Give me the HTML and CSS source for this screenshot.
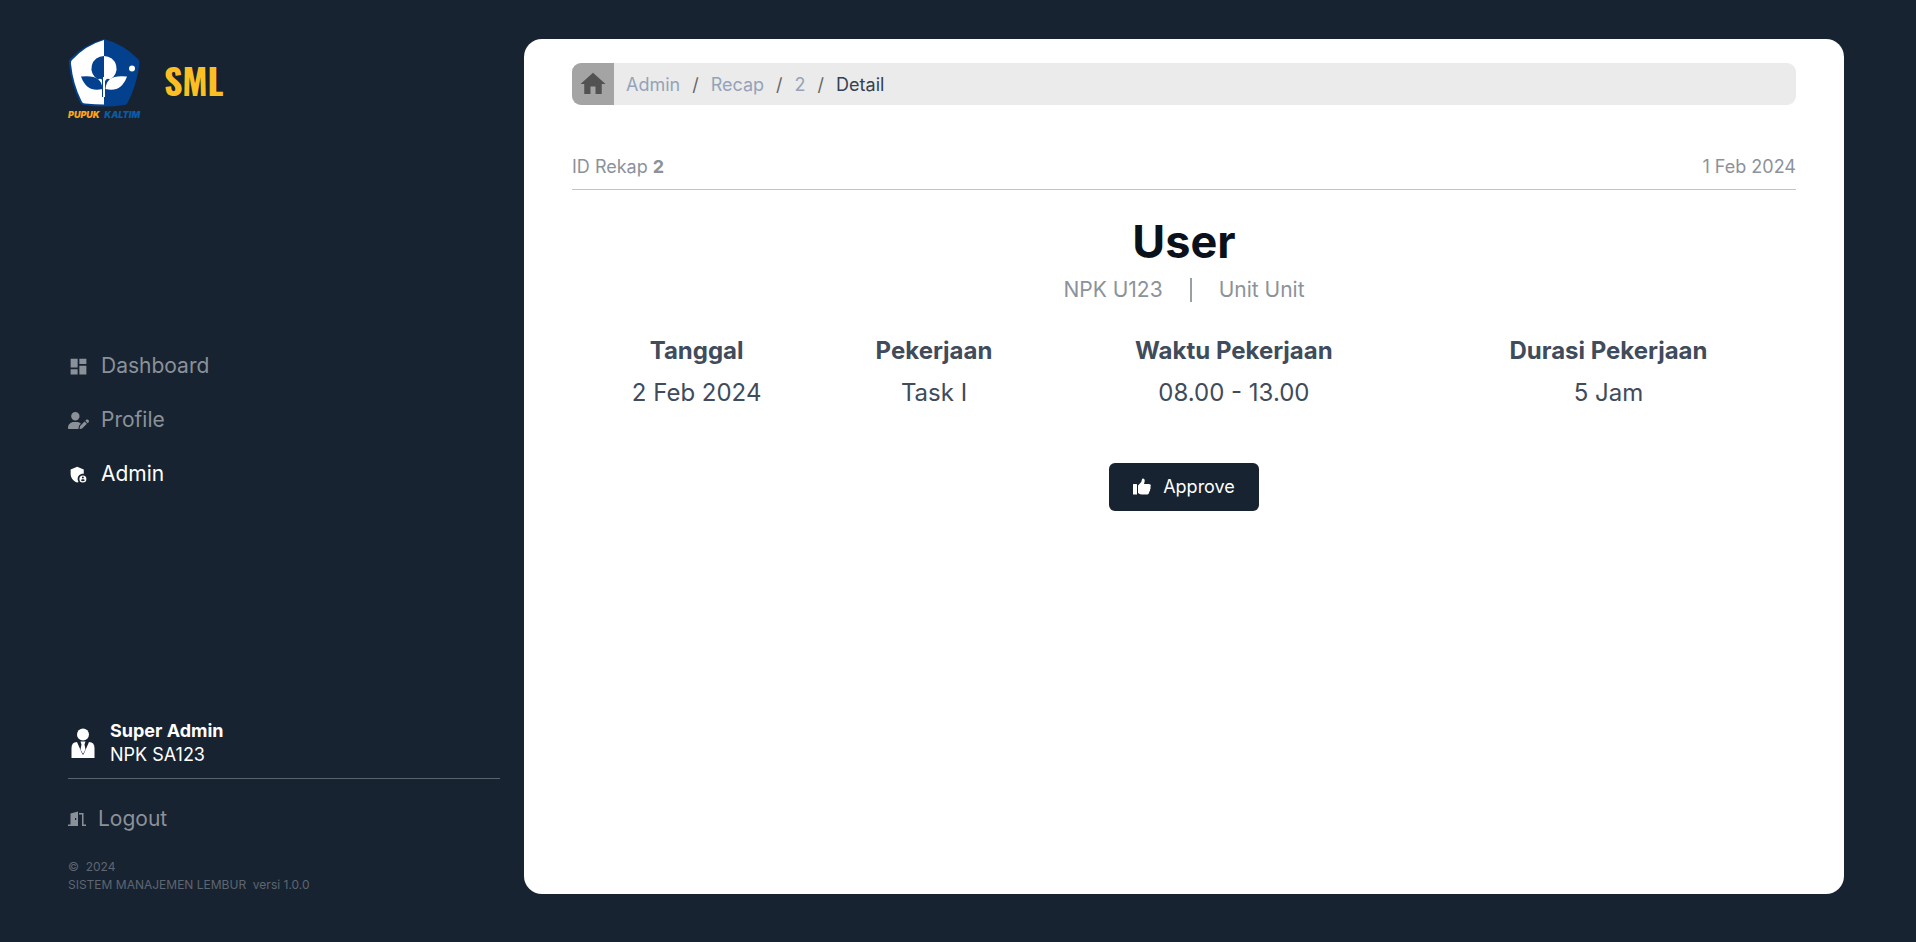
FILE: index.html
```html
<!DOCTYPE html>
<html lang="id">
<head>
<meta charset="utf-8">
<meta name="viewport" content="width=device-width, initial-scale=1">
<title>SML - Detail Rekap</title>
<link rel="stylesheet" href="styles.css">
</head>
<body>
<div class="layout">
  <aside class="sidebar">
    <header class="brand">
      <div class="logo">
        <svg class="logo-mark" viewBox="0 0 72 70" aria-hidden="true">
          <path d="M36 0Q55 5 70 20Q72 22 71.500 25Q69 45 60 63Q59 66 56 66Q36 69 16 66Q13 66 12 63Q3 45 1 25Q0 22 2 20Q17 5 36 0Z" fill="#03418f"/>
          <path d="M36 1Q18 6 4 21Q2.500 22.500 3 25Q5 45 13.500 62Q14.500 64.500 17 64.500Q28 65.500 36 65.500Z" fill="#fff"/>
          <path d="M36 17a12.500 12.500 0 0 0 -6 23.500Q34 38 36 45Z" fill="#03418f"/>
          <path d="M36 17a12.500 12.500 0 0 1 6 23.500Q38 38 36 45Z" fill="#fff"/>
          <path d="M13 37.500Q34 35 34.500 50Q19 54 13 37.500Z" fill="#03418f"/>
          <path d="M59 37.500Q38 35 37.500 50Q53 54 59 37.500Z" fill="#fff"/>
          <path d="M34.500 40V58" stroke="#03418f"/>
          <path d="M35 38h2v20h-2z" fill="#fff"/>
          <circle cx="64" cy="29.500" r="3" fill="#fff"/>
        </svg>
        <p class="logo-text"><span class="logo-first">PUPUK</span> <span class="logo-second">KALTIM</span></p>
      </div>
      <h1 class="brand-name">SML</h1>
    </header>
    <nav class="menu" aria-label="Menu utama">
      <a class="menu-link" href="#dashboard">
        <svg class="icon" viewBox="0 0 24 24" aria-hidden="true"><path d="M13 9V3h8v6h-8zM3 13V3h8v10H3zm10 8V11h8v10h-8zM3 21v-6h8v6H3z"/></svg>
        Dashboard
      </a>
      <a class="menu-link" href="#profile">
        <svg class="icon" viewBox="0 0 640 512" aria-hidden="true"><path d="M224 256a128 128 0 1 0 0-256 128 128 0 1 0 0 256zm-45.700 48C79.800 304 0 383.800 0 482.300 0 498.700 13.300 512 29.700 512h293.100c-3.100-8.800-3.700-18.400-1.400-27.800l15-60.100c2.800-11.300 8.600-21.500 16.800-29.700l40.300-40.300c-32.100-31-75.700-50.100-123.900-50.100zm435.500-68.300c-15.600-15.600-40.900-15.600-56.600 0l-29.400 29.400 71 71 29.400-29.400c15.600-15.600 15.600-40.900 0-56.600zM375.900 417c-4.100 4.100-7 9.200-8.400 14.900l-15 60.100c-1.400 5.500.2 11.200 4.200 15.200s9.700 5.600 15.200 4.200l60.100-15c5.600-1.400 10.800-4.300 14.900-8.400l129.200-129.300-71-71z"/></svg>
        Profile
      </a>
      <a class="menu-link active" href="#admin" aria-current="page">
        <svg class="icon" viewBox="0 0 24 24" aria-hidden="true"><path d="M17 11c.34 0 .67.040 1 .090V6.270L10.500 3 3 6.270v4.910c0 4.540 3.200 8.790 7.500 9.820.55-.13 1.080-.32 1.600-.55A5.970 5.970 0 0 1 11 17c0-3.310 2.690-6 6-6z"/><path fill-rule="evenodd" d="M17 13a4 4 0 1 0 0 8 4 4 0 0 0 0-8zm0 1.380a1.120 1.120 0 1 1 0 2.240 1.120 1.120 0 0 1 0-2.240zm0 5.370c-.93 0-1.740-.46-2.240-1.170.05-.72 1.510-1.080 2.240-1.080s2.190.36 2.240 1.080A2.730 2.730 0 0 1 17 19.750z"/></svg>
        Admin
      </a>
    </nav>
    <footer class="account">
      <div class="account-user">
        <svg class="account-icon" viewBox="0 0 30 34" aria-hidden="true"><circle cx="15" cy="8.500" r="6"/><path d="M9 16L14.500 28.500H15.500L21 16Q26.500 16 26.500 22V32H3.500V22Q3.500 16 9 16Z"/><path d="M12.500 15.500H17.500L16.500 18.500L17.500 23.500L15 28L12.500 23.500L13.500 18.500Z"/></svg>
        <div>
          <p class="account-name">Super Admin</p>
          <p>NPK SA123</p>
        </div>
      </div>
      <a class="logout" href="#logout">
        <svg class="logout-icon" viewBox="0 0 18 16" aria-hidden="true"><path fill-rule="evenodd" d="M0 13.500H2.500V2.500L10 .5V15H0ZM7 7V9H8.200V7Z"/><path d="M11 2H15.500V13.500H18V15H14V3.500H11Z"/></svg>
        Logout
      </a>
      <p class="copyright">©&nbsp; 2024<br>SISTEM MANAJEMEN LEMBUR&nbsp; versi 1.0.0</p>
    </footer>
  </aside>
  <main class="card">
    <nav class="breadcrumb" aria-label="Breadcrumb">
      <a class="home" href="#home" aria-label="Beranda"><svg class="home-icon" viewBox="0 0 24 24" aria-hidden="true"><path d="M10 20v-6h4v6h5v-8h3L12 3 2 12h3v8z"/></svg></a>
      <ol class="crumbs">
        <li><a href="#admin">Admin</a></li>
        <li><a href="#recap">Recap</a></li>
        <li><a href="#recap-2">2</a></li>
        <li><a class="current" href="#detail" aria-current="page">Detail</a></li>
      </ol>
    </nav>
    <div class="meta">
      <p>ID Rekap <strong>2</strong></p>
      <p>1 Feb 2024</p>
    </div>
    <section class="person">
      <h2 class="person-name">User</h2>
      <p class="person-info"><span>NPK U123</span><span class="divider"></span><span>Unit Unit</span></p>
    </section>
    <table class="details">
      <thead>
        <tr><th>Tanggal</th><th>Pekerjaan</th><th>Waktu Pekerjaan</th><th>Durasi Pekerjaan</th></tr>
      </thead>
      <tbody>
        <tr><td>2 Feb 2024</td><td>Task I</td><td>08.00 - 13.00</td><td>5 Jam</td></tr>
      </tbody>
    </table>
    <button class="approve" type="button">
      <svg class="approve-icon" viewBox="0 0 18 18" aria-hidden="true"><path d="M0 7Q0 6 .5 6H3.500Q4 6 4 7V16.500H.5Q0 16.500 0 16ZM5 7.500L8.300 4L9 1.200Q9.300 .2 10.300 .5Q12.300 1.200 11.500 4L11 6H16Q18 6.300 17.800 7.800Q17.700 8.500 17.300 9Q18.200 10.300 17 11.500Q17.500 12.800 16.200 13.800Q16.300 16.500 13 16.500H9Q7 16.500 5 15Z"/></svg>
      Approve
    </button>
  </main>
</div>
</body>
</html>
```

FILE: styles.css
```css
* {
  box-sizing: border-box;
}

body {
  margin: 0;
  background: #182332;
  font-family: Inter, "Liberation Sans", sans-serif;
  font-size: 18px;
  line-height: 24px;
  font-weight: 400;
}

h1, h2, p, ol {
  margin: 0;
  padding: 0;
}

a {
  color: inherit;
  text-decoration: none;
}

.layout {
  display: grid;
  grid-template-columns: 18fr 55fr;
  gap: 24px;
  min-height: 100vh;
  padding: 39px 72px 48px 68px;
}

.sidebar {
  display: flex;
  flex-direction: column;
  justify-content: space-between;
  color: #8b9198;
}

.brand {
  display: flex;
  align-items: center;
  gap: 24px;
}

.logo {
  width: 72px;
}

.logo-mark {
  display: block;
  width: 72px;
  height: 70px;
}

.logo-text {
  display: flex;
  justify-content: space-between;
  font-size: 9px;
  line-height: 12px;
  font-weight: 900;
  font-style: italic;
}

.logo-first {
  color: #faa61a;
}

.logo-second {
  color: #0a5ca5;
}

.brand-name {
  color: #fbbf24;
  font-family: Oswald, "Open Sans", sans-serif;
  font-size: 36px;
  line-height: 48px;
  font-weight: 700;
}

.menu {
  display: flex;
  flex-direction: column;
  gap: 24px;
}

.menu-link {
  display: flex;
  align-items: center;
  gap: 12px;
  font-size: 21px;
  line-height: 30px;
}

.menu-link.active {
  color: #fff;
}

.icon {
  width: 21px;
  height: 21px;
  fill: currentColor;
}

.account-user {
  display: flex;
  align-items: center;
  gap: 12px;
  padding-bottom: 11px;
  border-bottom: 1px solid #5b636d;
  color: #fff;
}

.account-name {
  font-weight: 700;
}

.account-icon {
  width: 30px;
  height: 34px;
  fill: #fff;
}

.logout {
  display: flex;
  align-items: center;
  gap: 12px;
  margin: 25px 0 24px;
  font-size: 21px;
  line-height: 30px;
}

.logout-icon {
  width: 18px;
  height: 16px;
  fill: currentColor;
}

.copyright {
  color: #5e6670;
  font-size: 12px;
  line-height: 18px;
}

.card {
  padding: 24px 48px;
  border-radius: 18px;
  background: #fff;
}

.breadcrumb {
  display: flex;
  height: 42px;
  overflow: hidden;
  border-radius: 9px;
  background: #ebebeb;
}

.home {
  display: grid;
  place-items: center;
  width: 42px;
  background: #a4a4a4;
}

.home-icon {
  width: 30px;
  height: 30px;
  fill: #525252;
}

.crumbs {
  display: flex;
  align-items: center;
  padding: 2px 12px 0;
  color: #94a3b8;
  list-style: none;
}

.crumbs li + li::before {
  content: "/";
  margin: 0 12px;
  color: #666;
}

.crumbs .current {
  color: #334155;
}

.meta {
  display: flex;
  justify-content: space-between;
  margin-top: 48px;
  padding-bottom: 9px;
  border-bottom: 1px solid #c4c4c4;
  color: #8c929a;
  line-height: 27px;
}

.person {
  margin-top: 25px;
  text-align: center;
}

.person-name {
  color: #0b111b;
  font-size: 45px;
  line-height: 54px;
  font-weight: 700;
}

.person-info {
  display: flex;
  justify-content: center;
  align-items: center;
  gap: 27px;
  margin-top: 6px;
  color: #8c929a;
  font-size: 21px;
  line-height: 30px;
}

.divider {
  width: 2px;
  height: 24px;
  background: #9a9fa7;
}

.details {
  width: 100%;
  margin-top: 25px;
  border-spacing: 0;
  color: #404b5b;
  font-size: 24px;
  line-height: 36px;
  text-align: center;
}

.details th,
.details td {
  padding: 3px;
}

.approve {
  display: flex;
  align-items: center;
  gap: 12px;
  height: 48px;
  margin: 49px auto 0;
  padding: 0 24px;
  border: 0;
  border-radius: 6px;
  background: #182332;
  color: #fff;
  font: inherit;
}

.approve-icon {
  width: 18px;
  height: 18px;
  fill: currentColor;
}
```
